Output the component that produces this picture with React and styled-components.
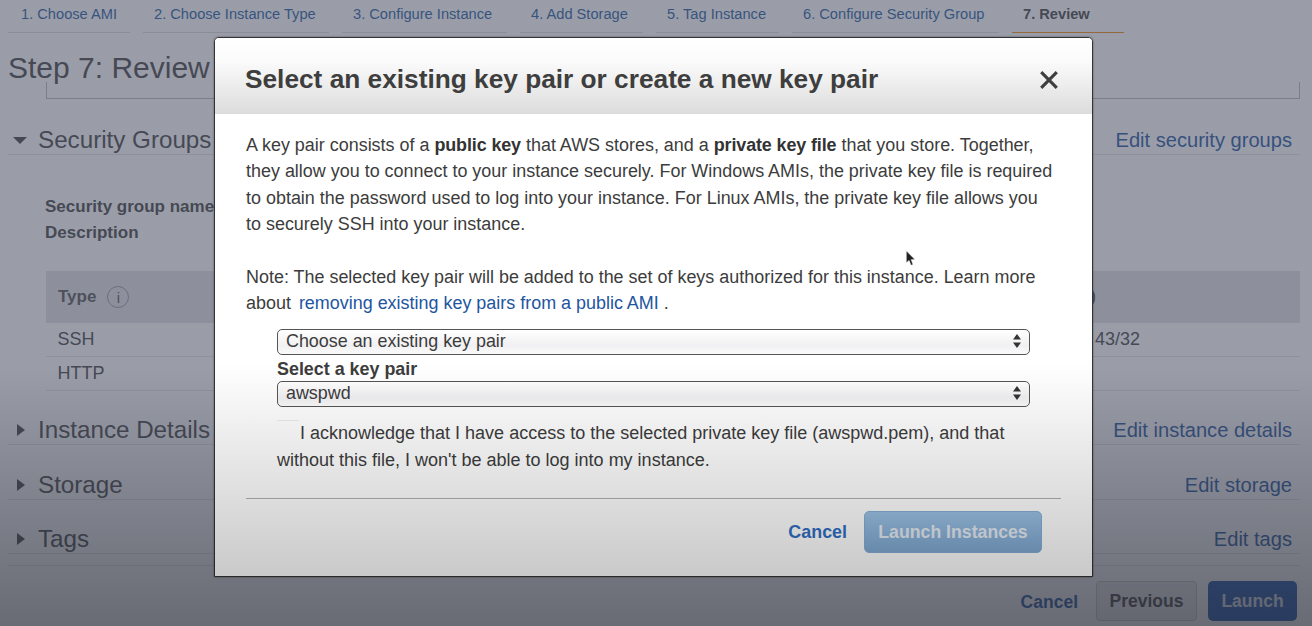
import React from 'react';
import styled, { createGlobalStyle } from 'styled-components';

const GlobalStyle = createGlobalStyle`
  html, body {
    margin: 0;
    padding: 0;
    background: #6a6c72;
  }
  * {
    box-sizing: border-box;
  }
`;

const steps = [
  { label: '1. Choose AMI', width: 122 },
  { label: '2. Choose Instance Type', width: 186 },
  { label: '3. Configure Instance', width: 165 },
  { label: '4. Add Storage', width: 123 },
  { label: '5. Tag Instance', width: 123 },
  { label: '6. Configure Security Group', width: 207 },
  { label: '7. Review', width: 112, active: true },
];

const sections = [
  { title: 'Instance Details', edit: 'Edit instance details' },
  { title: 'Storage', edit: 'Edit storage' },
  { title: 'Tags', edit: 'Edit tags' },
];

const App = () => {
  return (
    <Page>
      <GlobalStyle />
      <Tabs>
        {steps.map((step) => (
          <Tab key={step.label} $width={step.width} $active={step.active}>
            {step.label}
          </Tab>
        ))}
      </Tabs>
      <Title>Step 7: Review</Title>
      <TableStub />

      <FirstSection>
        <SectionTitle>
          <ArrowDown />
          Security Groups
        </SectionTitle>
        <EditLink>Edit security groups</EditLink>
      </FirstSection>

      <GroupInfo>
        <strong>Security group name</strong>
        <strong>Description</strong>
      </GroupInfo>

      <RulesTable>
        <RulesHead>
          <HeadCell>
            Type
            <InfoIcon>i</InfoIcon>
          </HeadCell>
          <HeadCell>(i)</HeadCell>
        </RulesHead>
        <RulesRow>
          <span>SSH</span>
          <span>43/32</span>
        </RulesRow>
        <RulesRow>
          <span>HTTP</span>
        </RulesRow>
      </RulesTable>

      <Collapsed>
        {sections.map((section) => (
          <Section key={section.title}>
            <SectionTitle>
              <ArrowRight />
              {section.title}
            </SectionTitle>
            <EditLink>{section.edit}</EditLink>
          </Section>
        ))}
      </Collapsed>
      <LastRule />

      <Footer>
        <FooterCancel>Cancel</FooterCancel>
        <PreviousButton>Previous</PreviousButton>
        <LaunchButton>Launch</LaunchButton>
      </Footer>

      <Backdrop />

      <Modal>
        <ModalHeader>
          <ModalTitle>Select an existing key pair or create a new key pair</ModalTitle>
          <CloseIcon viewBox="0 0 18 18">
            <path d="M2 2 L16 16 M16 2 L2 16" />
          </CloseIcon>
        </ModalHeader>
        <ModalBody>
          <Paragraph>
            A key pair consists of a <b>public key</b> that AWS stores, and a <b>private key file</b> that you store. Together,
            <br />
            they allow you to connect to your instance securely. For Windows AMIs, the private key file is required
            <br />
            to obtain the password used to log into your instance. For Linux AMIs, the private key file allows you
            <br />
            to securely SSH into your instance.
          </Paragraph>
          <Paragraph>
            Note: The selected key pair will be added to the set of keys authorized for this instance. Learn more
            <br />
            about <BodyLink>removing existing key pairs from a public AMI</BodyLink> .
          </Paragraph>
          <KeyForm>
            <SelectBox>
              Choose an existing key pair
              <SelectArrows />
            </SelectBox>
            <FieldLabel>Select a key pair</FieldLabel>
            <SelectBox>
              awspwd
              <SelectArrows />
            </SelectBox>
            <Acknowledge>
              <CheckboxGhost />
              I acknowledge that I have access to the selected private key file (awspwd.pem), and that
              <br />
              without this file, I won't be able to log into my instance.
            </Acknowledge>
          </KeyForm>
          <ModalFooter>
            <ModalCancel>Cancel</ModalCancel>
            <LaunchInstances>Launch Instances</LaunchInstances>
          </ModalFooter>
        </ModalBody>
      </Modal>

      <Cursor viewBox="0 0 14 20">
        <path d="M1.5 1 L1.5 15 L4.8 12.2 L7 18 L9.4 17 L7.2 11.4 L11.6 11.2 Z" />
      </Cursor>

      <Shade />
    </Page>
  );
};

const SelectArrows = () => (
  <ArrowsIcon viewBox="0 0 8 14">
    <path d="M4 0 L8 5.5 L0 5.5 Z M0 8.5 L8 8.5 L4 14 Z" />
  </ArrowsIcon>
);

export default App;

const Page = styled.div`
  position: relative;
  width: 1312px;
  height: 626px;
  overflow: hidden;
  background: #fff;
  font-family: "Liberation Sans", Arial, sans-serif;
  color: #333;
`;

const Tabs = styled.div`
  display: flex;
  gap: 13px;
  padding-left: 8px;
`;

const Tab = styled.div`
  width: ${(p) => p.$width}px;
  height: 33px;
  padding: 5px 0 0 11px;
  font-size: 14.65px;
  line-height: 18px;
  white-space: nowrap;
  color: ${(p) => (p.$active ? '#444' : '#245c9f')};
  font-weight: ${(p) => (p.$active ? 'bold' : 'normal')};
  border-bottom: 1px solid ${(p) => (p.$active ? '#f08a10' : '#ddd')};
  &:first-child {
    padding-left: 13px;
  }
`;

const Title = styled.h1`
  margin: 17px 0 0 8px;
  font-size: 30px;
  line-height: 36px;
  font-weight: normal;
  color: #444;
`;

const TableStub = styled.div`
  height: 17px;
  margin: -4px 12px 0 46px;
  border: 1px solid #bbb;
  border-top: none;
`;

const Section = styled.div`
  display: flex;
  align-items: flex-end;
  justify-content: space-between;
  height: 54.3px;
  margin: 0 12px 0 8px;
  padding: 0 8px 0 5px;
  border-bottom: 1px solid #e4e4e4;
`;

const FirstSection = styled(Section)`
  height: 56px;
`;

const SectionTitle = styled.div`
  display: flex;
  align-items: center;
  gap: 11px;
  font-size: 24.2px;
  line-height: 30px;
  height: 30px;
  color: #444;
  margin-bottom: -1px;
`;

const ArrowDown = styled.span`
  width: 0;
  height: 0;
  border-left: 7px solid transparent;
  border-right: 7px solid transparent;
  border-top: 7px solid #444;
`;

const ArrowRight = styled.span`
  width: 0;
  height: 0;
  margin: 0 2px 0 4px;
  border-top: 6px solid transparent;
  border-bottom: 6px solid transparent;
  border-left: 8px solid #444;
`;

const EditLink = styled.a`
  font-size: 20.1px;
  line-height: 28px;
  color: #1f55a0;
`;

const GroupInfo = styled.div`
  display: flex;
  flex-direction: column;
  gap: 8px;
  margin: 43px 0 0 45px;
  font-size: 17px;
  line-height: 18px;
  color: #444;
`;

const RulesTable = styled.div`
  margin: 29px 12px 0 46px;
`;

const RulesHead = styled.div`
  display: flex;
  align-items: center;
  justify-content: space-between;
  height: 52px;
  padding: 0 204px 0 12px;
  background: #e2e2e4;
  font-size: 17px;
  font-weight: bold;
  color: #555;
`;

const HeadCell = styled.div`
  display: flex;
  align-items: center;
  gap: 11px;
`;

const InfoIcon = styled.span`
  display: flex;
  align-items: center;
  justify-content: center;
  width: 22px;
  height: 22px;
  border: 1px solid #999;
  border-radius: 50%;
  font-size: 15px;
  font-weight: normal;
`;

const RulesRow = styled.div`
  display: flex;
  align-items: center;
  justify-content: space-between;
  height: 34px;
  padding: 0 160px 0 11.5px;
  border-bottom: 1px solid #e4e4e4;
  font-size: 18px;
  color: #444;
`;

const Collapsed = styled.div`
  margin-top: 0;
`;

const LastRule = styled.div`
  height: 12px;
  margin: 0 12px 0 8px;
  border-bottom: 1px solid #e4e4e4;
`;

const Footer = styled.div`
  display: flex;
  align-items: center;
  justify-content: flex-end;
  margin: 15px 15px 0 0;
`;

const FooterCancel = styled.a`
  margin: 3px 18px 0 0;
  font-size: 17.5px;
  font-weight: bold;
  color: #1f55a0;
`;

const PreviousButton = styled.button`
  width: 101px;
  height: 40px;
  margin-right: 11px;
  padding-top: 3px;
  border: 1px solid #ccc;
  border-radius: 4px;
  background: #eee;
  font: bold 17.5px "Liberation Sans", Arial, sans-serif;
  color: #444;
`;

const LaunchButton = styled.button`
  width: 89px;
  height: 40px;
  padding-top: 3px;
  border: none;
  border-radius: 5px;
  background: #1f55ad;
  font: bold 17.5px "Liberation Sans", Arial, sans-serif;
  color: #dfe3ea;
`;

const Backdrop = styled.div`
  position: absolute;
  inset: 0;
  background: linear-gradient(rgba(71, 77, 97, 0.55) 60%, rgba(71, 77, 97, 0.62));
`;

const Modal = styled.div`
  position: absolute;
  left: 214px;
  top: 37px;
  width: 879px;
  height: 540px;
  background: #fff;
  border: 1px solid #333;
  border-radius: 5px 5px 0 0;
  box-shadow: 0 0 2px rgba(0, 0, 0, 0.5);
`;

const ModalHeader = styled.div`
  display: flex;
  align-items: center;
  justify-content: space-between;
  height: 76px;
  padding: 6px 33px 0 30px;
  border-radius: 4px 4px 0 0;
  background: linear-gradient(#ffffff, #fbfbfb 30%, #dcdcdc);
`;

const ModalTitle = styled.h2`
  margin: 0;
  font-size: 26.25px;
  font-weight: bold;
  color: #3e3e3e;
`;

const CloseIcon = styled.svg`
  width: 20px;
  height: 20px;
  margin-top: 2px;
  fill: none;
  stroke: #3e3e3e;
  stroke-width: 2.8;
`;

const ModalBody = styled.div`
  padding: 18px 31px 0;
`;

const Paragraph = styled.p`
  margin: 0 0 26px;
  font-size: 17.94px;
  line-height: 26.4px;
  color: #3c3c3c;
  white-space: nowrap;
  b {
    color: #333;
    letter-spacing: -0.12px;
  }
`;

const BodyLink = styled.a`
  margin-left: 3px;
  color: #22559f;
`;

const KeyForm = styled.div`
  width: 753px;
  margin: -13px 0 0 31px;
`;

const SelectBox = styled.div`
  position: relative;
  height: 26px;
  padding-left: 8px;
  border: 1.5px solid #555;
  border-radius: 5px;
  background: linear-gradient(#ffffff, #f0f0f2 65%, #fbfbfb);
  font-size: 17.9px;
  line-height: 22px;
  color: #3c3c3c;
`;

const ArrowsIcon = styled.svg`
  position: absolute;
  right: 8px;
  top: 3px;
  width: 8px;
  height: 16px;
  fill: #333;
`;

const FieldLabel = styled.div`
  height: 26px;
  font-size: 17.9px;
  line-height: 28px;
  font-weight: bold;
  color: #3c3c3c;
`;

const Acknowledge = styled.div`
  position: relative;
  margin-top: 13px;
  font-size: 18px;
  line-height: 26.5px;
  color: #3c3c3c;
  white-space: nowrap;
  text-indent: 23px;
`;

const CheckboxGhost = styled.span`
  position: absolute;
  left: 0;
  top: 0;
  width: 22px;
  border-top: 1px solid #ececec;
`;

const ModalFooter = styled.div`
  display: flex;
  align-items: flex-start;
  justify-content: flex-end;
  gap: 17px;
  height: 80px;
  margin-top: 25px;
  padding: 12px 19px 0 0;
  border-top: 1px solid #b0b0b0;
`;

const ModalCancel = styled.a`
  margin-top: 11px;
  font-size: 17.9px;
  font-weight: bold;
  color: #2f6fc4;
`;

const LaunchInstances = styled.button`
  width: 178px;
  height: 42px;
  border: 1px solid #86aed6;
  border-radius: 5px;
  background: linear-gradient(#9cc2e6, #7fa9d2);
  font: bold 17.7px "Liberation Sans", Arial, sans-serif;
  color: #e4ecf4;
`;

const Cursor = styled.svg`
  position: absolute;
  left: 905px;
  top: 249px;
  width: 12px;
  height: 19px;
  fill: #222;
  stroke: #fff;
  stroke-width: 0.6;
`;

const Shade = styled.div`
  position: absolute;
  inset: 0;
  pointer-events: none;
  background: linear-gradient(rgba(0, 0, 0, 0) 58%, rgba(0, 0, 0, 0.26) 100%);
`;
